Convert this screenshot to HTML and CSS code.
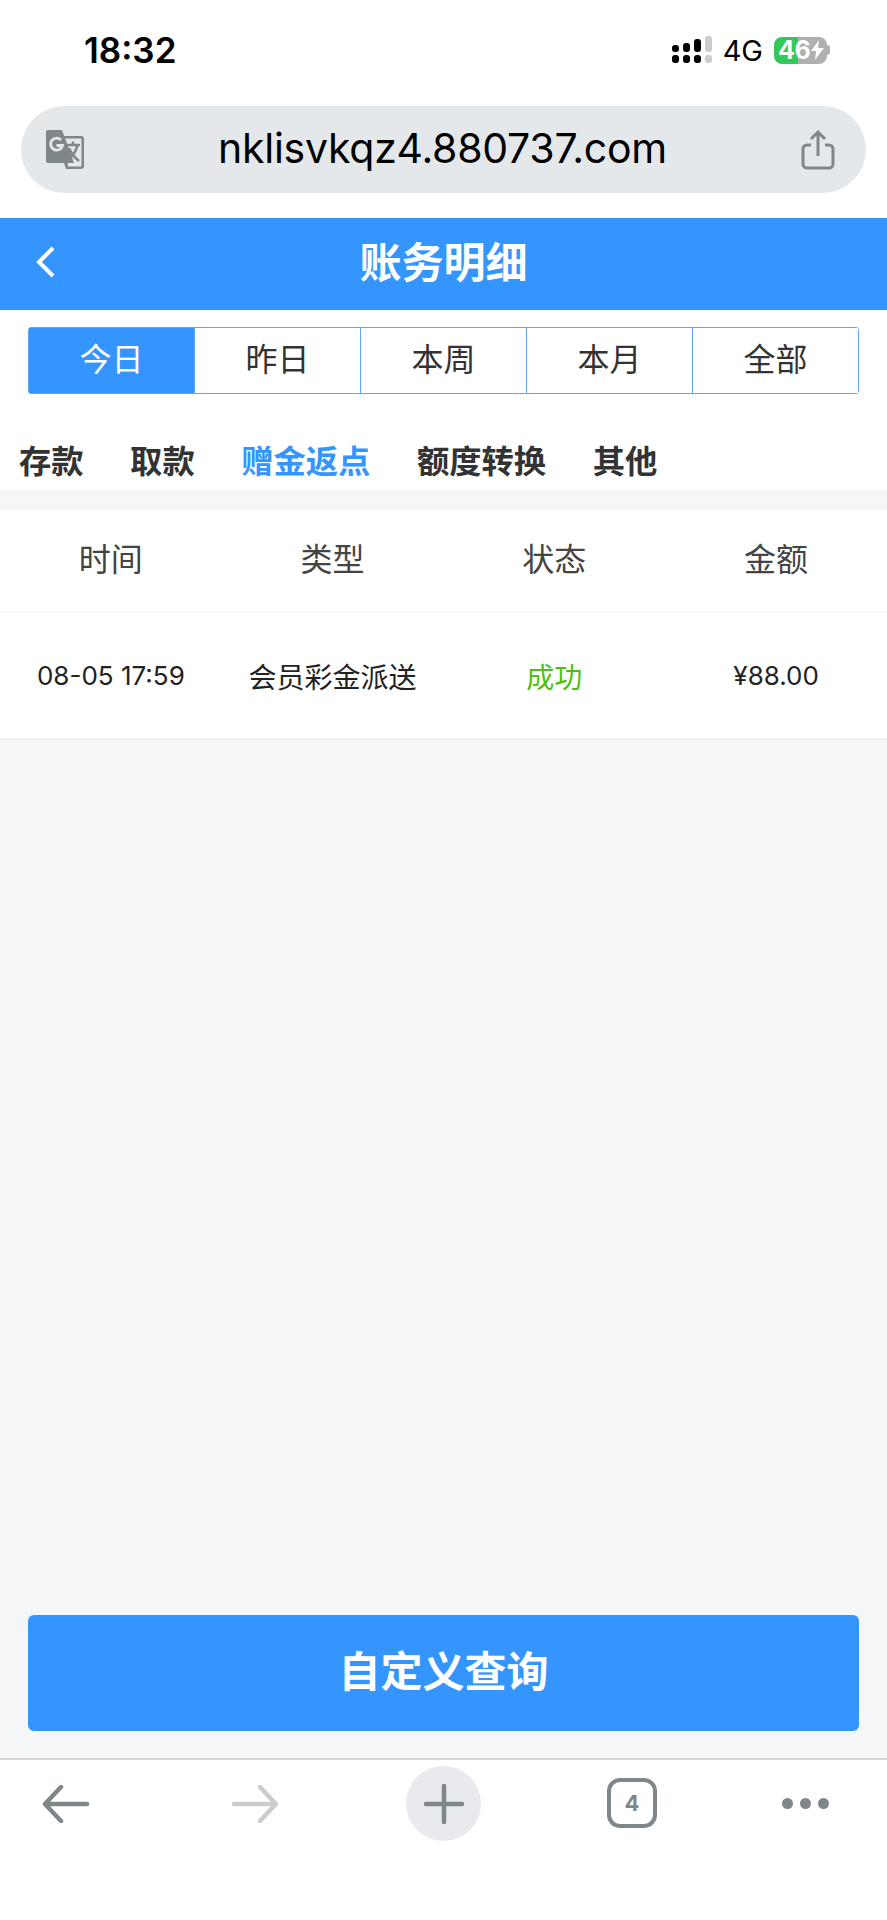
FILE: index.html
```html
<!DOCTYPE html>
<html lang="zh-CN">
<head>
    <meta charset="UTF-8">
    <title>账务明细</title>
    <meta name="viewport" content="width=device-width, initial-scale=1.0">
    <link rel="stylesheet" href="styles.css">
</head>
<body>
<div class="phone">
    <div class="status-bar">
        <span class="clock">18:32</span>
        <div class="status-right">
            <svg class="signal" width="40" height="28" viewBox="0 0 40 28">
                <rect x="0" y="9" width="7" height="7" rx="3" fill="#000"/>
                <rect x="0" y="19" width="7" height="8" rx="3" fill="#000"/>
                <rect x="11" y="7" width="7" height="9" rx="3" fill="#000"/>
                <rect x="11" y="19" width="7" height="8" rx="3" fill="#000"/>
                <rect x="22" y="3" width="7" height="13" rx="3" fill="#000"/>
                <rect x="22" y="19" width="7" height="8" rx="3" fill="#000"/>
                <rect x="33" y="0" width="7" height="16" rx="3" fill="#ccc"/>
                <rect x="33" y="19" width="7" height="8" rx="3" fill="#ccc"/>
            </svg>
            <span class="net">4G</span>
            <div class="battery">
                <span class="battery-num">46</span>
                <svg class="bolt" width="13" height="20" viewBox="0 0 13 20"><path d="M8 0 L0 11 H5 L4 20 L13 8 H7 Z" fill="#fff"/></svg>
            </div>
            <span class="battery-cap"></span>
        </div>
    </div>

    <div class="url-wrap">
        <div class="url-bar">
            <svg class="translate-icon" width="38" height="39" viewBox="0 0 38 39">
                <path d="M16 6 H35 a3 3 0 0 1 3 3 V36 a3 3 0 0 1 -3 3 H20 L18 33 Z" fill="#80878b"/>
                <path d="M19 8.5 H34.5 a1 1 0 0 1 1 1 V35.5 a1 1 0 0 1 -1 1 H22 Z" fill="#e5e8eb"/>
                <path d="M2 0 H16 L28 33 H2 a2 2 0 0 1 -2 -2 V2 a2 2 0 0 1 2 -2 Z" fill="#80878b"/>
                <path d="M15 10 a6 6 0 1 0 1.5 5.5 H10.5" fill="none" stroke="#e5e8eb" stroke-width="2.8"/>
                <path d="M20 15 H34 M27 11.5 V15 M31.5 15 C30 22 26 27 21 29 M23 18 C25 23 29 28 33 31" fill="none" stroke="#80878b" stroke-width="2.6"/>
            </svg>
            <span class="url-text">nklisvkqz4.880737.com</span>
            <svg class="share-icon" width="34" height="40" viewBox="0 0 34 40">
                <path d="M10 15 H6 a4 4 0 0 0 -4 4 V34 a4 4 0 0 0 4 4 H28 a4 4 0 0 0 4 -4 V19 a4 4 0 0 0 -4 -4 H24" fill="none" stroke="#80878b" stroke-width="3"/>
                <path d="M17 26 V3 M10 9 L17 2 L24 9" fill="none" stroke="#80878b" stroke-width="3"/>
            </svg>
        </div>
    </div>

    <header class="title-bar">
        <svg class="back" width="20" height="32" viewBox="0 0 20 32"><path d="M17 2 L3 16 L17 30" fill="none" stroke="#fff" stroke-width="4"/></svg>
        <h1>账务明细</h1>
    </header>

    <div class="range-wrap">
        <div class="range-tabs">
            <div class="range-tab active">今日</div>
            <div class="range-tab">昨日</div>
            <div class="range-tab">本周</div>
            <div class="range-tab">本月</div>
            <div class="range-tab">全部</div>
        </div>
    </div>

    <nav class="type-nav">
        <a>存款</a>
        <a>取款</a>
        <a class="current">赠金返点</a>
        <a>额度转换</a>
        <a>其他</a>
    </nav>

    <main class="content">
        <div class="row head">
            <div>时间</div>
            <div>类型</div>
            <div>状态</div>
            <div>金额</div>
        </div>
        <div class="row item">
            <div>08-05 17:59</div>
            <div class="kind">会员彩金派送</div>
            <div class="ok">成功</div>
            <div>¥88.00</div>
        </div>
        <div class="spacer"></div>
        <button class="query-btn">自定义查询</button>
    </main>

    <footer class="toolbar">
        <svg class="nav-back" width="48" height="38" viewBox="0 0 48 38"><path d="M45 19 H4 M19 2 L3 19 L19 36" fill="none" stroke="#80878b" stroke-width="4.5" stroke-linecap="round" stroke-linejoin="round"/></svg>
        <svg class="nav-forward" width="48" height="38" viewBox="0 0 48 38"><path d="M3 19 H44 M29 2 L45 19 L29 36" fill="none" stroke="#ccc" stroke-width="4.5" stroke-linecap="round" stroke-linejoin="round"/></svg>
        <div class="plus">
            <svg width="40" height="40" viewBox="0 0 40 40"><path d="M20 2 V38 M2 20 H38" fill="none" stroke="#80878b" stroke-width="4.5" stroke-linecap="round"/></svg>
        </div>
        <div class="tab-count">4</div>
        <div class="more"><i></i><i></i><i></i></div>
    </footer>
</div>
</body>
</html>
```

FILE: styles.css
```css
* { box-sizing: border-box; }
body { margin: 0; background: #fff; font-family: Inter, "Noto Sans CJK SC", sans-serif; }
.phone { width: 887px; height: 1920px; display: flex; flex-direction: column; overflow: hidden; }

.status-bar { height: 106px; padding: 0 0 6px 84px; display: flex; align-items: center; justify-content: space-between; }
.clock { font-size: 35px; font-weight: 600; color: #000; }
.status-right { display: flex; align-items: center; padding-right: 57px; }
.net { font-size: 29px; margin: 0 11px; color: #000; }
.battery { width: 53px; height: 27px; border-radius: 8px; background: linear-gradient(to right, #34c759 45%, #b0b0b0 45%); display: flex; align-items: center; padding-left: 4px; }
.battery-num { font-size: 25px; font-weight: 700; letter-spacing: -0.5px; color: #fff; line-height: 27px; }
.bolt { margin-left: 1px; flex: none; }
.battery-cap { width: 3px; height: 10px; background: #b0b0b0; border-radius: 0 3px 3px 0; }

.url-wrap { padding: 0 21px; height: 112px; }
.url-bar { height: 87px; border-radius: 44px; background: #e5e8eb; display: flex; align-items: center; justify-content: space-between; padding: 0 31px 0 25px; }
.url-text { font-size: 41px; color: #000; letter-spacing: -0.25px; margin-bottom: 4px; }

.title-bar { height: 92px; background: #3595ff; display: flex; align-items: center; justify-content: center; position: relative; padding-bottom: 10px; }
.title-bar h1 { margin: 0; font-size: 42px; font-weight: 700; color: #fff; }
.back { position: absolute; left: 36px; top: 28px; }

.range-wrap { padding: 17px 28px 0; }
.range-tabs { display: flex; height: 67px; border: 1px solid #5fa5f8; border-radius: 3px; }
.range-tab { flex: 1; display: flex; align-items: center; justify-content: center; padding-bottom: 7px; font-size: 32px; color: #333; border-left: 1px solid #5fa5f8; background: #fff; }
.range-tab:first-child { border-left: 0; }
.range-tab.active { background: #3595ff; color: #fff; }

.type-nav { height: 96px; display: flex; gap: 46.5px; align-items: center; padding: 33px 0 0 19px; }
.type-nav a { font-size: 32.3px; font-weight: 700; color: #333; }
.type-nav a.current { color: #3595ff; }

.content { flex: 1; background: #f4f6f8; padding-top: 20px; display: flex; flex-direction: column; }
.row { display: grid; grid-template-columns: repeat(4, 1fr); background: #fff; text-align: center; align-items: center; }
.row.head { height: 103px; padding-bottom: 7px; font-size: 32px; color: #444; border-bottom: 2px solid #f6f7f9; }
.row.item { height: 127px; font-size: 26px; color: #222; border-bottom: 2px solid #f0f1f3; }
.kind { font-size: 28px; }
.ok { color: #4fbf0d; font-size: 28px; }
.spacer { flex: 1; }
.query-btn { display: block; margin: 0 28px 27px; height: 116px; padding: 0 0 9px; border: 0; border-radius: 6px; background: #3595ff; color: #fff; font: 700 42px Inter, "Noto Sans CJK SC", sans-serif; }

.toolbar { height: 162px; border-top: 2px solid #d5d7d9; background: #fff; display: flex; gap: 126px; align-items: flex-start; padding: 6px 0 0 42px; }
.toolbar > svg { margin-top: 19px; }
.toolbar > .nav-back { margin-right: 15px; }
.toolbar > .nav-forward { margin-right: 1px; }
.plus { width: 75px; height: 75px; border-radius: 50%; background: #e9eaee; display: flex; align-items: center; justify-content: center; }
.tab-count { width: 50px; height: 50px; margin-top: 12px; border: 4px solid #80878b; border-radius: 13px; display: flex; align-items: center; justify-content: center; font-size: 22px; font-weight: 700; color: #80878b; }
.more { display: flex; gap: 7px; margin-top: 32px; margin-left: -1px; }
.more i { width: 11px; height: 11px; border-radius: 50%; background: #80878b; }
```
